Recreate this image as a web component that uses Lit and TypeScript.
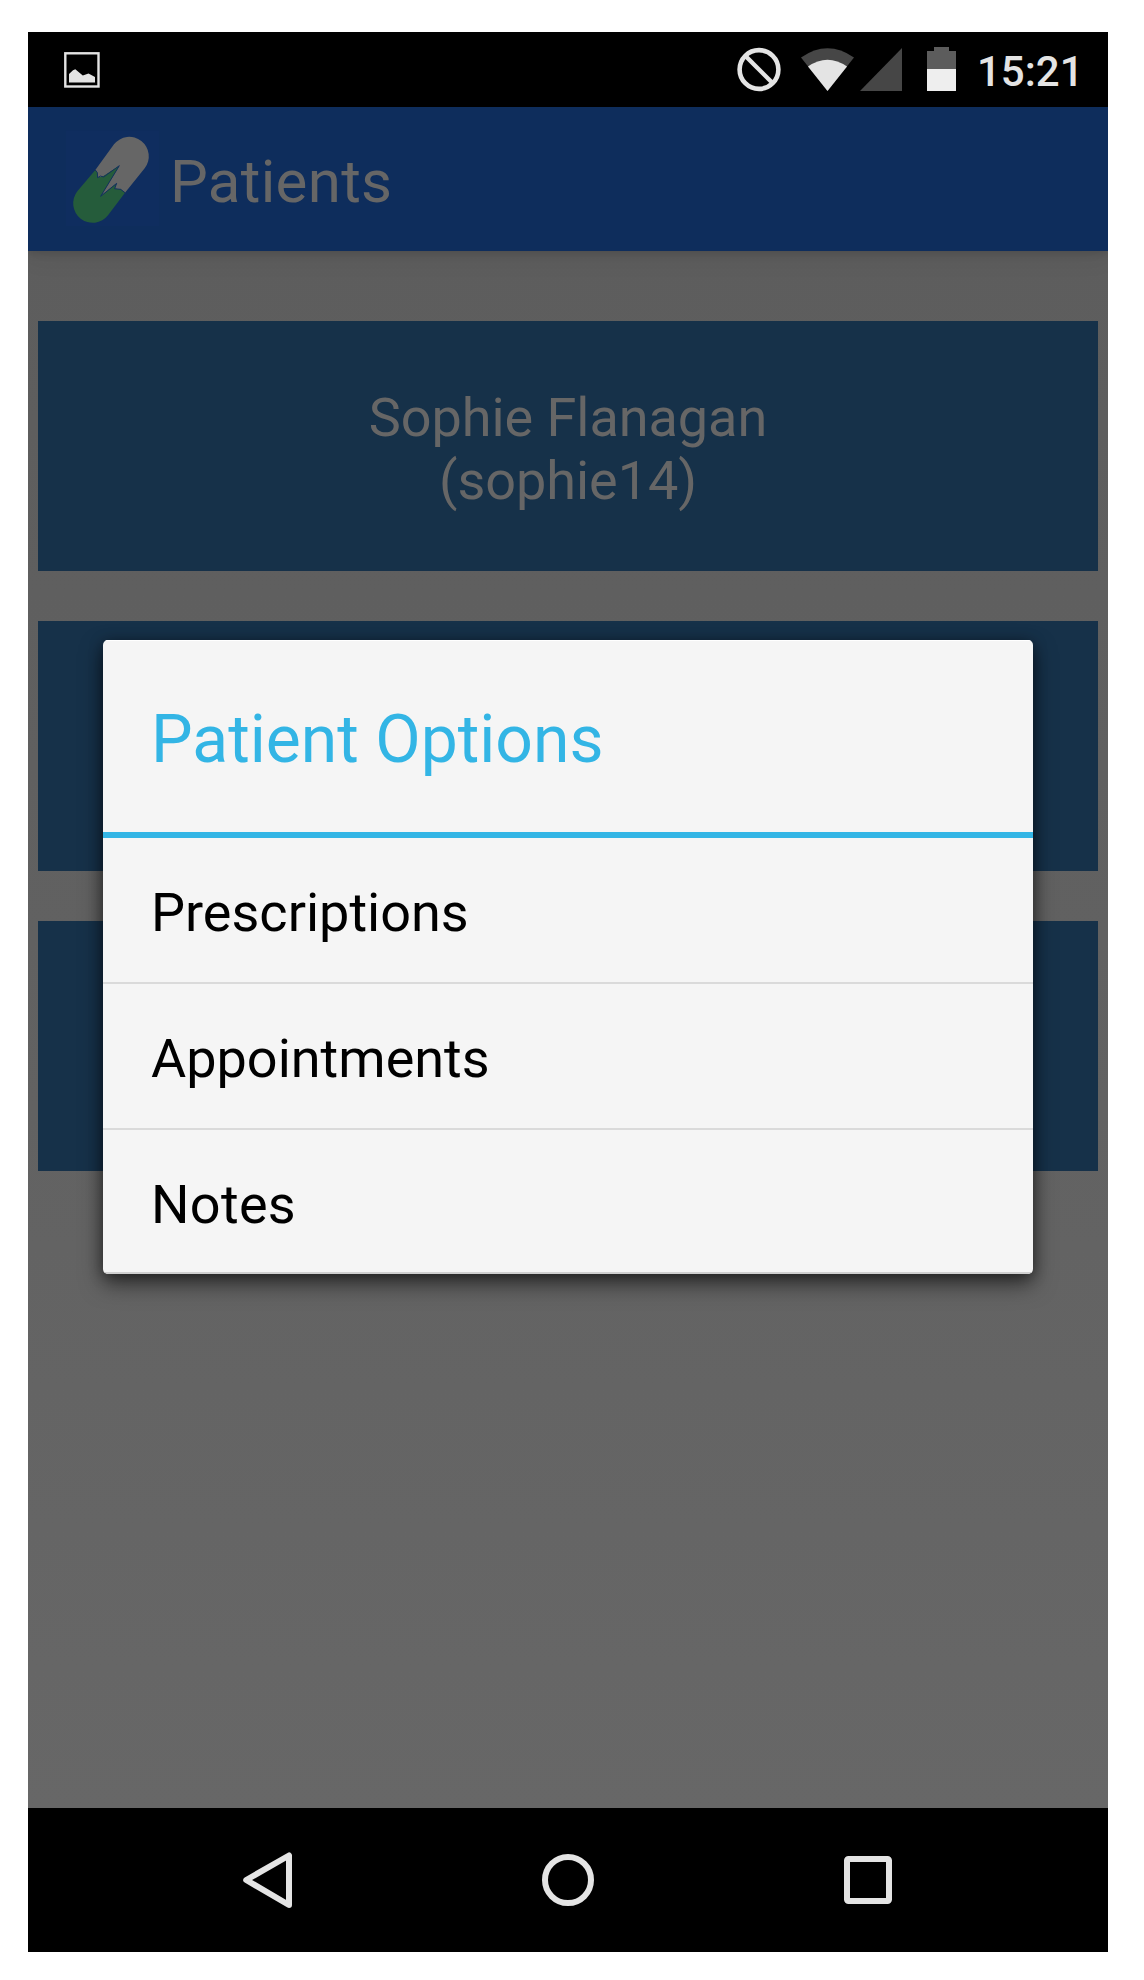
import { LitElement, html, css } from "lit";
import { customElement } from "lit/decorators.js";

@customElement("status-bar")
class StatusBar extends LitElement {
  static styles = css`
    :host {
      display: flex;
      align-items: flex-start;
      height: 75px;
      background: #000;
      color: #e4e4e4;
    }
    svg { display: block; flex: none; }
    .picture { margin: 20px 0 0 36px; }
    .spacer { flex: 1; }
    .blocked { margin: 15px 20px 0 0; }
    .wifi { margin: 16px 6px 0 0; }
    .signal { margin: 16px 25px 0 0; }
    .battery { margin: 15px 21px 0 0; }
    .clock {
      font: 500 42px/49px Roboto, sans-serif;
      margin: 15px 26px 0 0;
      width: 105px;
      text-align: right;
    }
  `;
  render() {
    return html`
      <svg class="picture" width="36" height="36" viewBox="0 0 36 36">
        <rect x="1.3" y="1.3" width="33.2" height="33.2" fill="none" stroke="#e4e4e4" stroke-width="2.4" />
        <path d="M5 30.5V22L9 18.2L11.3 17.2L18.8 23.6L24.5 21.4L31 25V30.5Z" fill="#e4e4e4" />
      </svg>
      <div class="spacer"></div>
      <svg class="blocked" width="44" height="45" viewBox="0 0 44 45">
        <circle cx="22" cy="22.5" r="19.4" fill="none" stroke="#e4e4e4" stroke-width="4.6" />
        <path d="M9 9.5L35 35.5" stroke="#e4e4e4" stroke-width="4.4" />
      </svg>
      <svg class="wifi" width="53" height="43" viewBox="0 0 53 43">
        <path d="M0 9.5Q26.5 -9 53 9.5L26.5 43Z" fill="#464646" />
        <path d="M7 18.5Q26.5 5 46 18.5L26.5 43Z" fill="#e4e4e4" />
      </svg>
      <svg class="signal" width="42" height="43" viewBox="0 0 42 43">
        <path d="M42 0V43H0Z" fill="#464646" />
      </svg>
      <svg class="battery" width="29" height="44" viewBox="0 0 29 44">
        <path d="M0 22V4H7V0H22V4H29V22Z" fill="#5c5c5c" />
        <path d="M0 22H29V44H0Z" fill="#eee" />
      </svg>
      <div class="clock">15:21</div>
    `;
  }
}

@customElement("app-bar")
class AppBar extends LitElement {
  static styles = css`
    :host {
      display: flex;
      height: 144px;
      background: #0e2d5c;
      color: #666;
      position: relative;
      box-shadow: 0 2px 8px rgba(0, 0, 0, 0.14), 0 6px 24px rgba(0, 0, 0, 0.07);
    }
    svg { display: block; margin: 13px 0 0 32px; }
    .title {
      font: 400 60px/70px Roboto, sans-serif;
      letter-spacing: 0.3px;
      margin: 40px 0 0;
    }
  `;
  render() {
    return html`
      <svg width="110" height="120" viewBox="0 0 330 360">
        <rect x="17" y="31" width="280" height="287" fill="#0f2d5f" />
        <path d="M106 150L162 73A58.4 58.4 0 0 1 254 145L195 218L182 208L164 206L170 190L122 229L178 137L131 168L113 173L112 158Z" fill="#666" />
        <path d="M106 150L52 214A58.4 58.4 0 0 0 144 286L195 218L182 208L164 206L170 190L122 229L178 137L131 168L113 173L112 158Z" fill="#255c3b" />
        <path d="M106 150L112 158L113 173L121 168L131 171L178 137L122 229L170 190L164 206L182 208L195 218" fill="none" stroke="#0f2d5f" stroke-width="2.6" />
      </svg>
      <div class="title">Patients</div>
    `;
  }
}

@customElement("options-dialog")
class OptionsDialog extends LitElement {
  static styles = css`
    :host {
      display: block;
      box-sizing: border-box;
      width: 930px;
      height: 634px;
      border-radius: 5px;
      background: #f5f5f5;
      overflow: hidden;
      font-family: Roboto, sans-serif;
      box-shadow: 0 10px 22px rgba(0, 0, 0, 0.52), 0 2px 14px rgba(0, 0, 0, 0.36);
    }
    .header {
      height: 192px;
      box-sizing: border-box;
      padding: 60px 48px 0;
      border-top: 1px solid #fff;
      font-size: 66px;
      line-height: 77px;
      color: #33b5e5;
    }
    .rule { height: 6px; background: #33b5e5; }
    .row {
      height: 144px;
      box-sizing: border-box;
      padding: 43px 48px 0;
      font-size: 54px;
      line-height: 63px;
      color: #000;
    }
    .row + .row { border-top: 2px solid #dadada; height: 146px; }
    .row:last-child { border-bottom: 2px solid #d0d0d0; letter-spacing: 0.3px; }
  `;
  render() {
    const options = ["Prescriptions", "Appointments", "Notes"];
    return html`
      <div class="header">Patient Options</div>
      <div class="rule"></div>
      ${options.map((o) => html`<div class="row">${o}</div>`)}
    `;
  }
}

@customElement("nav-bar")
class NavBar extends LitElement {
  static styles = css`
    :host {
      display: flex;
      align-items: center;
      justify-content: center;
      gap: 240px;
      height: 144px;
      background: #000;
    }
    svg { display: block; fill: none; stroke: #e4e4e4; stroke-width: 6; }
  `;
  render() {
    return html`
      <svg width="60" height="60" viewBox="0 0 60 60">
        <path d="M51 5.5V55L8.2 30Z" stroke-linejoin="round" />
      </svg>
      <svg width="60" height="60" viewBox="0 0 60 60"><circle cx="30" cy="30" r="23" /></svg>
      <svg width="60" height="60" viewBox="0 0 60 60"><rect x="9" y="9" width="42" height="42" rx="1.5" /></svg>
    `;
  }
}

@customElement("app-root")
class AppRoot extends LitElement {
  static styles = css`
    :host {
      display: block;
      box-sizing: border-box;
      width: 1144px;
      height: 1980px;
      padding: 32px 0 0 28px;
      background: #fff;
      overflow: hidden;
    }
    .phone {
      position: relative;
      display: flex;
      flex-direction: column;
      width: 1080px;
      height: 1920px;
      overflow: hidden;
    }
    .content {
      flex: 1;
      display: flex;
      flex-direction: column;
      gap: 50px;
      padding: 70px 10px 0;
      background: linear-gradient(#5d5d5d, #626262 55%, #676767);
    }
    status-bar { position: relative; z-index: 2; }
    app-bar, nav-bar { z-index: 1; }
    .card {
      height: 250px;
      box-sizing: border-box;
      padding-top: 65px;
      background: #163149;
      color: #666;
      text-align: center;
      font: 400 54px/63px Roboto, sans-serif;
      letter-spacing: -0.05px;
    }
    .dialog { position: absolute; left: 75px; top: 608px; z-index: 2; }
  `;
  render() {
    return html`
      <div class="phone">
        <status-bar></status-bar>
        <app-bar></app-bar>
        <div class="content">
          <div class="card">Sophie Flanagan<br />(sophie14)</div>
          <div class="card"></div>
          <div class="card"></div>
        </div>
        <nav-bar></nav-bar>
        <options-dialog class="dialog"></options-dialog>
      </div>
    `;
  }
}
